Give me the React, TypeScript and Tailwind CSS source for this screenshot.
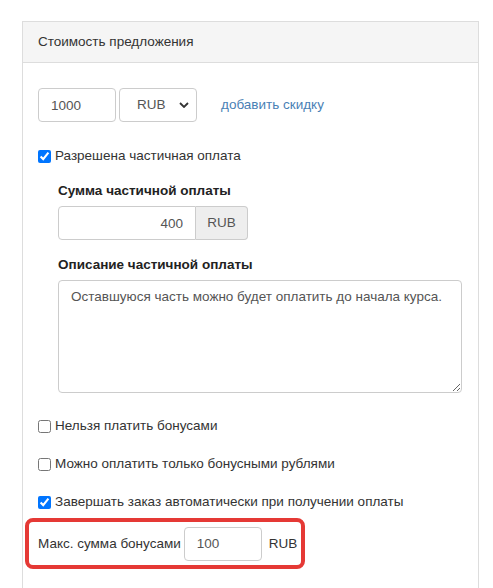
import { useState } from "react";

function Check({ checked, label }: { checked: boolean; label: string }) {
  const [on, setOn] = useState(checked);
  return (
    <label className="flex h-[20px] items-center gap-[4px] text-[13.5px] leading-[20px] text-[#333]">
      <input
        type="checkbox"
        checked={on}
        onChange={() => setOn(!on)}
        className="m-0 h-[13px] w-[13px] accent-[#0075ff]"
      />
      <span>{label}</span>
    </label>
  );
}

export default function App() {
  return (
    <div
      className="h-[588px] w-[493px] overflow-hidden bg-white pt-[21px] pl-[22px] pr-[14px]"
      style={{ fontFamily: '"Liberation Sans", Arial, sans-serif' }}
    >
      <div className="h-[600px] border border-[#ddd]">
        <div className="flex h-[41px] items-center border-b border-[#ddd] bg-[#f5f5f5] px-[15px] text-[13.5px] text-[#333]">
          Стоимость предложения
        </div>

        <div className="px-[15px] pt-[25px] text-[13.5px] leading-[20px]">
          <div className="flex items-center">
            <input
              defaultValue="1000"
              className="h-[34px] w-[78px] rounded-[4px] border border-[#ccc] px-[12px] text-[13.5px] text-[#555] outline-none"
            />
            <div className="relative ml-[3px]">
              <select className="h-[34px] w-[78px] appearance-none rounded-[4px] border border-[#ccc] bg-white pl-[17px] text-[13.5px] text-[#555] outline-none">
                <option>RUB</option>
              </select>
              <svg
                viewBox="0 0 10 6"
                className="pointer-events-none absolute right-[8px] top-[14px] h-[6px] w-[10px]"
              >
                <path d="M1 1l4 4 4-4" fill="none" stroke="#333" strokeWidth="1.8" />
              </svg>
            </div>
            <a className="ml-[24px] text-[#4a7fb5]">добавить скидку</a>
          </div>

          <div className="mt-[24px]">
            <Check checked label="Разрешена частичная оплата" />
          </div>

          <div className="pl-[20px]">
            <div className="mt-[15px] font-bold text-[#222]">Сумма частичной оплаты</div>
            <div className="mt-[5px] flex h-[34px] w-[190px]">
              <input
                defaultValue="400"
                className="h-full w-[138px] rounded-l-[4px] border border-[#ccc] px-[12px] text-right text-[13.5px] text-[#555] outline-none"
              />
              <div className="flex h-full flex-1 items-center justify-center rounded-r-[4px] border border-l-0 border-[#ccc] bg-[#eee] text-[#555]">
                RUB
              </div>
            </div>

            <div className="mt-[15px] font-bold text-[#222]">Описание частичной оплаты</div>
            <textarea
              defaultValue="Оставшуюся часть можно будет оплатить до начала курса."
              className="mt-[5px] block h-[113px] w-[404px] resize-y rounded-[4px] border border-[#ccc] px-[12px] py-[6px] text-[13.5px] leading-[20px] text-[#555] outline-none"
            />
          </div>

          <div className="mt-[23px] flex flex-col gap-[18px]">
            <Check checked={false} label="Нельзя платить бонусами" />
            <Check checked={false} label="Можно оплатить только бонусными рублями" />
            <Check checked label="Завершать заказ автоматически при получении оплаты" />
          </div>

          <div className="-ml-[13px] mt-[6px] flex h-[51px] w-[280px] items-center whitespace-nowrap rounded-[8px] border-[4px] border-[#e53935] pl-[9px] text-[#333]">
            <span className="shrink-0">Макс. сумма бонусами</span>
            <input
              defaultValue="100"
              className="ml-[3px] h-[34px] w-[78px] shrink-0 rounded-[4px] border border-[#ccc] px-[12px] text-[13.5px] text-[#555] outline-none"
            />
            <span className="ml-[7px] shrink-0">RUB</span>
          </div>
        </div>
      </div>
    </div>
  );
}
